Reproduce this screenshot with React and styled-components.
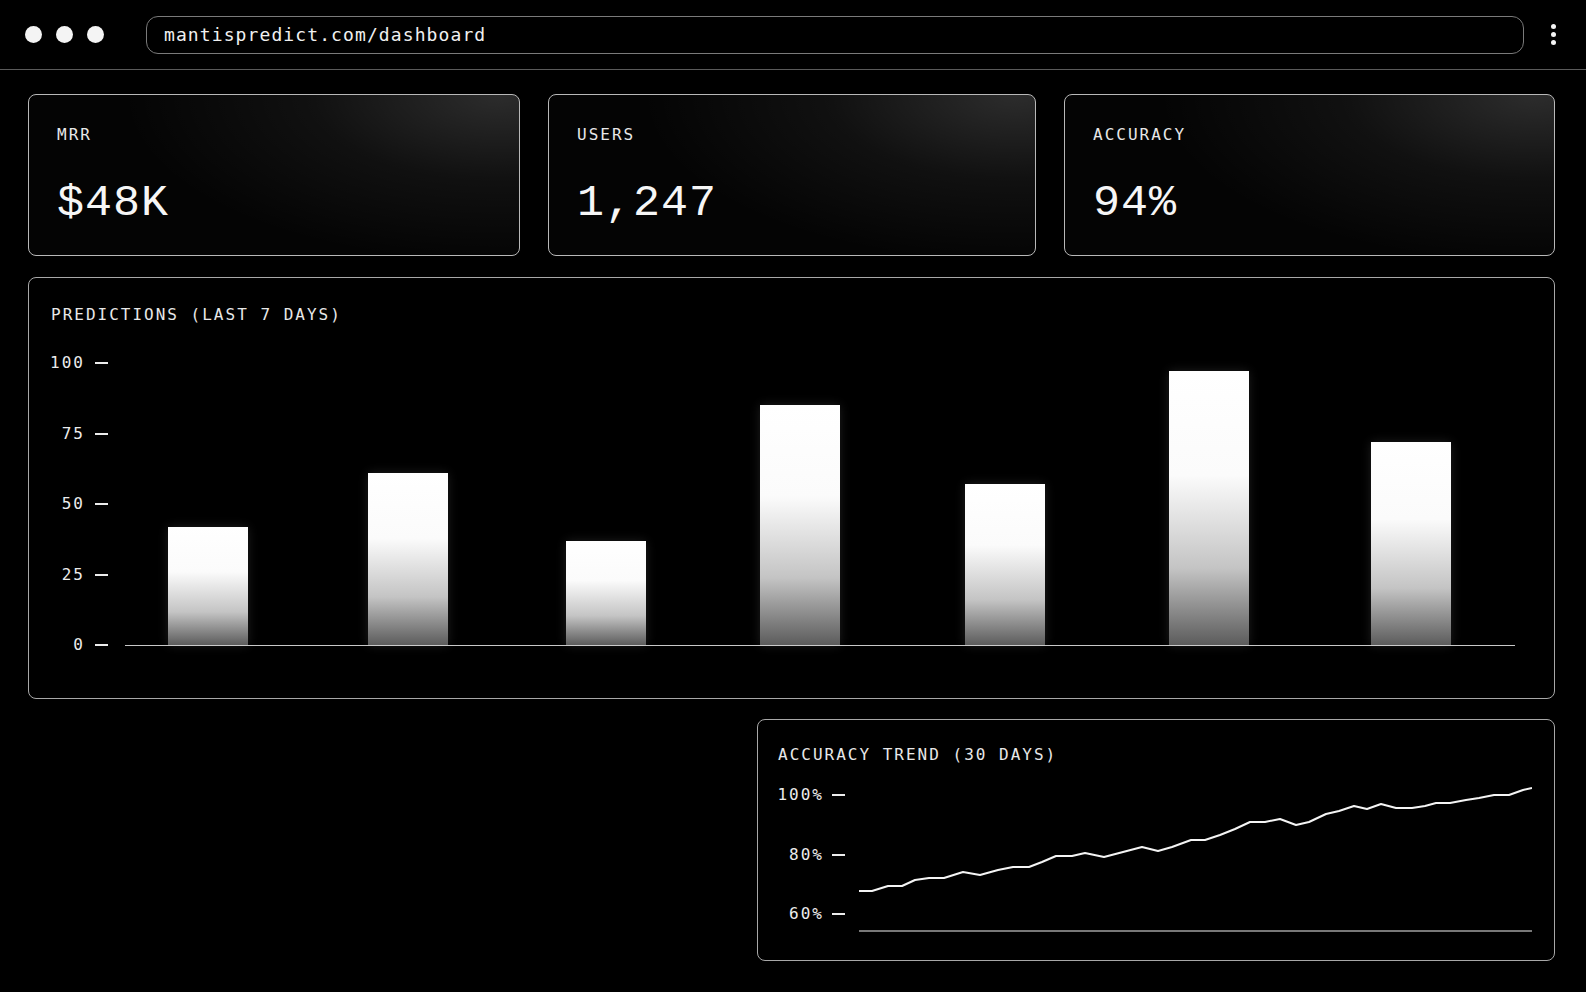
import React from 'react';
import styled, { createGlobalStyle } from 'styled-components';

const GlobalStyle = createGlobalStyle`
  * { box-sizing: border-box; }
  html, body {
    margin: 0;
    background: #000;
  }
  body {
    font-family: "DejaVu Sans Mono", "Liberation Mono", monospace;
    color: #f2f2f2;
  }
`;

const TopBar = styled.header`
  height: 70px;
  display: flex;
  align-items: center;
  padding: 0 30px 0 25px;
  border-bottom: 1px solid #5a5a5a;
`;

const Lights = styled.div`
  display: flex;
  gap: 14px;
`;

const Light = styled.span`
  width: 17px;
  height: 17px;
  border-radius: 50%;
  background: #f4f4f4;
`;

const UrlBox = styled.div`
  flex: 1;
  height: 38px;
  margin-left: 42px;
  border: 1px solid #7a7a7a;
  border-radius: 12px;
  display: flex;
  align-items: center;
  padding-left: 17px;
  font-size: 18px;
  letter-spacing: 1.1px;
  color: #f0f0f0;
`;

const Kebab = styled.div`
  margin-left: 27px;
  display: flex;
  flex-direction: column;
  gap: 3px;
  span {
    width: 5px;
    height: 5px;
    border-radius: 50%;
    background: #f4f4f4;
  }
`;

const Main = styled.main`
  padding: 24px 31px 0 28px;
`;

const StatGrid = styled.div`
  display: grid;
  grid-template-columns: 492px 488px 1fr;
  column-gap: 28px;
`;

const StatCard = styled.div`
  border: 1px solid #b8b8b8;
  border-radius: 8px;
  padding: 30px 28px 29px;
  background:
    radial-gradient(110% 150% at 96% 0%, rgba(255, 255, 255, 0.16) 0%, rgba(255, 255, 255, 0.05) 35%, rgba(0, 0, 0, 0) 70%),
    #040404;
`;

const Label = styled.div`
  font-size: 16px;
  line-height: 20px;
  letter-spacing: 2px;
  color: #e8e8e8;
`;

const Value = styled.div`
  margin-top: 37px;
  font-family: "Liberation Mono", "DejaVu Sans Mono", monospace;
  font-size: 45px;
  line-height: 44px;
  letter-spacing: 1px;
  color: #f6f6f6;
`;

const Panel = styled.section`
  border: 1px solid #a8a8a8;
  border-radius: 8px;
  background: #000;
`;

const BarPanel = styled(Panel)`
  margin-top: 21px;
  padding: 27px 39px 45px 22px;
`;

const TrendRow = styled.div`
  display: flex;
  justify-content: flex-end;
  margin-top: 20px;
`;

const TrendPanel = styled(Panel)`
  width: 798px;
  padding: 25px 22px 27px 20px;
`;

const ChartRow = styled.div`
  display: flex;
  align-items: flex-start;
  margin-top: ${p => p.$top}px;
`;

const YAxis = styled.div`
  width: ${p => p.$w}px;
  height: ${p => p.$h}px;
  margin-top: ${p => p.$offset || 0}px;
  display: flex;
  flex-direction: column;
  justify-content: space-between;
  align-items: flex-end;
`;

const Tick = styled.div`
  display: flex;
  align-items: center;
  height: 16px;
  font-size: 16px;
  line-height: 16px;
  letter-spacing: 2px;
  color: #ececec;
  &::after {
    content: '';
    width: 13px;
    height: 2px;
    margin-left: ${p => p.$gap}px;
    background: #ececec;
  }
`;

const Plot = styled.div`
  flex: 1;
  margin-left: 17px;
  height: 291px;
  border-bottom: 1px solid #c8c8c8;
  display: flex;
  align-items: flex-end;
`;

const Bar = styled.div`
  width: 80px;
  margin-left: ${p => p.$offset}px;
  background: linear-gradient(to bottom, #ffffff 0%, #fbfbfb 38%, #c4c4c4 72%, #5c5c5c 100%);
  box-shadow: 0 0 10px rgba(255, 255, 255, 0.12);
`;

const TrendSvg = styled.svg`
  display: block;
  margin-left: 14px;
  flex: none;
`;

const stats = [
  { label: 'MRR', value: '$48K' },
  { label: 'USERS', value: '1,247' },
  { label: 'ACCURACY', value: '94%' },
];

// value, space before the bar
const predictions = [
  [42, 43], [61, 120], [37, 118], [85, 114], [57, 125], [97, 124], [72, 122],
];

const trend = [
  [0, 110], [13, 110], [29, 105], [43, 105], [56, 99], [70, 97], [85, 97], [104, 91],
  [121, 94], [139, 89], [154, 86], [170, 86], [183, 81], [197, 75], [213, 75], [226, 72],
  [245, 76], [264, 71], [283, 66], [299, 70], [313, 66], [332, 59], [346, 59], [361, 54],
  [376, 48], [391, 41], [406, 41], [421, 38], [437, 44], [450, 41], [467, 33], [480, 30],
  [495, 25], [508, 28], [522, 23], [537, 27], [553, 27], [566, 25], [577, 22], [591, 22],
  [607, 19], [620, 17], [635, 14], [650, 14], [664, 9], [673, 7],
];

export default function App() {
  return (
    <>
      <GlobalStyle />
      <TopBar>
        <Lights>
          <Light />
          <Light />
          <Light />
        </Lights>
        <UrlBox>mantispredict.com/dashboard</UrlBox>
        <Kebab>
          <span />
          <span />
          <span />
        </Kebab>
      </TopBar>

      <Main>
        <StatGrid>
          {stats.map(s => (
            <StatCard key={s.label}>
              <Label>{s.label}</Label>
              <Value>{s.value}</Value>
            </StatCard>
          ))}
        </StatGrid>

        <BarPanel>
          <Label>PREDICTIONS (LAST 7 DAYS)</Label>
          <ChartRow $top={30}>
            <YAxis $w={57} $h={298}>
              {['100', '75', '50', '25', '0'].map(t => (
                <Tick key={t} $gap={10}>{t}</Tick>
              ))}
            </YAxis>
            <Plot>
              {predictions.map(([v, gap], i) => (
                <Bar key={i} $offset={gap} style={{ height: `${v * 2.82}px` }} />
              ))}
            </Plot>
          </ChartRow>
        </BarPanel>

        <TrendRow>
          <TrendPanel>
            <Label>ACCURACY TREND (30 DAYS)</Label>
            <ChartRow $top={16}>
              <YAxis $w={67} $h={135} $offset={6}>
                {['100%', '80%', '60%'].map(t => (
                  <Tick key={t} $gap={8}>{t}</Tick>
                ))}
              </YAxis>
              <TrendSvg width="673" height="152" viewBox="0 0 673 152">
                <line x1="0" y1="150" x2="673" y2="150" stroke="#a0a0a0" strokeWidth="1.5" />
                <polyline
                  points={trend.map(p => p.join(',')).join(' ')}
                  fill="none"
                  stroke="#f4f4f4"
                  strokeWidth="2"
                  strokeLinejoin="round"
                />
              </TrendSvg>
            </ChartRow>
          </TrendPanel>
        </TrendRow>
      </Main>
    </>
  );
}
